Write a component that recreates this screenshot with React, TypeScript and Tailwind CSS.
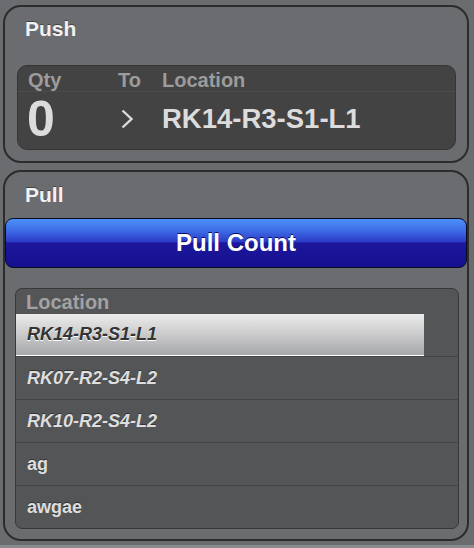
const locations = [
  { name: "RK14-R3-S1-L1", italic: true, selected: true },
  { name: "RK07-R2-S4-L2", italic: true },
  { name: "RK10-R2-S4-L2", italic: true },
  { name: "ag", italic: false },
  { name: "awgae", italic: false },
];

const font = { fontFamily: '"Liberation Sans", Arial, sans-serif' };

export default function App() {
  return (
    <div className="w-[474px] h-[548px] bg-[#8a8b8e]" style={font}>
      <div className="h-[545px] bg-[#6b6c70] flex flex-col gap-[7px] pl-[3px] pr-[5px] pt-[5px]">
        {/* Push */}
        <div className="h-[158px] border-2 border-[#2c2c2d] rounded-[18px] pt-[11px]">
          <div className="pl-[20px] text-[21px] leading-[22px] font-bold text-[#f2f2f2] [text-shadow:0_-1px_0_#444]">
            Push
          </div>
          <div className="mt-[25px] ml-[12px] mr-[11px] h-[85px] rounded-[10px] border border-[#353535] bg-[#434343] flex flex-col">
            <div className="h-[26px] border-b border-[#4c4c4c] flex pl-[10px] pt-[3px] text-[20px] leading-[22px] font-bold text-[#9c9c9c]">
              <div className="w-[90px]">Qty</div>
              <div className="w-[44px]">To</div>
              <div>Location</div>
            </div>
            <div className="flex-1 flex items-center pl-[9px] pb-[3px] text-[#dcdcdc] font-bold">
              <div className="w-[91px] text-[50px] leading-[50px]">0</div>
              <div className="w-[44px] pl-[3px] flex items-center">
                <svg width="12" height="20" viewBox="0 0 12 20">
                  <polyline points="1.5,1.5 10.5,10 1.5,18.5" fill="none" stroke="#dcdcdc" strokeWidth="2.4" />
                </svg>
              </div>
              <div className="text-[27.5px] leading-[32px]">RK14-R3-S1-L1</div>
            </div>
          </div>
        </div>

        {/* Pull */}
        <div className="h-[371px] border-2 border-[#2c2c2d] rounded-[18px] pt-[12px]">
          <div className="pl-[20px] text-[21px] leading-[22px] font-bold text-[#f2f2f2] [text-shadow:0_-1px_0_#444]">
            Pull
          </div>
          <button className="mt-[12px] w-full h-[50px] rounded-[8px] border border-[#0b0b20] bg-[linear-gradient(to_bottom,#4c90f8_0%,#3d6ae6_25%,#2b3cc6_47%,#1c179c_50%,#16108f_100%)] text-white font-bold text-[24px] leading-[26px] [text-shadow:0_-1px_0_#0a0a60]">
            Pull Count
          </button>
          <div className="mt-[20px] ml-[10px] mr-[8px] rounded-[7px] border border-[#383838] bg-[#545557] overflow-hidden">
            <div className="h-[25px] flex items-center pl-[10px] text-[20px] leading-[22px] font-bold text-[#a2a2a2]">
              Location
            </div>
            {locations.map((loc, i) => (
              <div key={loc.name} className={i < locations.length - 1 ? "border-b border-[#444446]" : ""}>
                {loc.selected ? (
                  <div className="w-[408px] h-[42px] flex items-center pl-[11px] border-b border-white bg-[linear-gradient(to_bottom,#ececec,#a7a8aa)] text-[#333] italic font-bold text-[18px] [text-shadow:0_1px_0_#fff]">
                    {loc.name}
                  </div>
                ) : (
                  <div
                    className={
                      "h-[42px] flex items-center pl-[11px] text-[#dedede] font-bold text-[18px] [text-shadow:0_-1px_0_#333] " +
                      (loc.italic ? "italic" : "")
                    }
                  >
                    {loc.name}
                  </div>
                )}
              </div>
            ))}
          </div>
        </div>
      </div>
    </div>
  );
}
